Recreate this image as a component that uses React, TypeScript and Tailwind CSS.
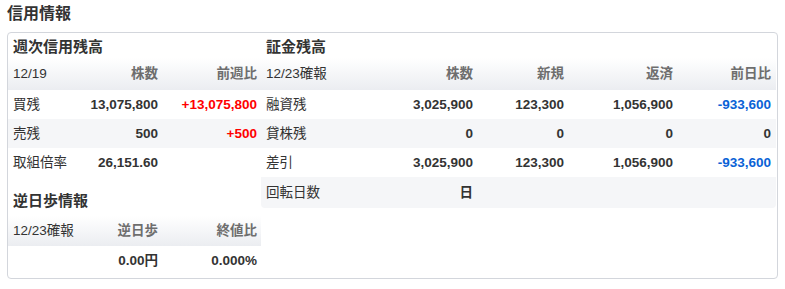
import React from "react";

const font = { fontFamily: '"Liberation Sans", Arial, "Noto Sans CJK JP", sans-serif' };

type Cell = { v: string; c?: "red" | "blue" };

const tone = (c?: string) =>
  c === "red" ? "text-[#ff0000]" : c === "blue" ? "text-[#0a62d6]" : "text-[#333]";

function HeadRow({ cols, widths }: { cols: string[]; widths: string }) {
  return (
    <div
      className={`grid ${widths} h-[32px] items-center bg-gradient-to-b from-white to-[#ebedf1]`}
    >
      {cols.map((c, i) =>
        i === 0 ? (
          <div key={i} className="pl-[5px] text-[#333]">
            {c}
          </div>
        ) : (
          <div key={i} className="pr-[4px] text-right font-bold text-[#6e6e6e]">
            {c}
          </div>
        )
      )}
    </div>
  );
}

function DataRow({
  label,
  cells,
  widths,
  gray,
  h = "h-[29px]",
  extra = "",
}: {
  label: string;
  cells: Cell[];
  widths: string;
  gray?: boolean;
  h?: string;
  extra?: string;
}) {
  return (
    <div className={`grid ${widths} ${h} items-center ${gray ? "bg-[#f5f6f8]" : ""} ${extra}`}>
      <div className="pl-[5px] text-[#333]">{label}</div>
      {cells.map((c, i) => (
        <div key={i} className={`pr-[4px] text-right font-bold ${tone(c.c)}`}>
          {c.v}
        </div>
      ))}
    </div>
  );
}

const leftCols = "grid-cols-[74px_80px_99px]";
const rightCols = "grid-cols-[108px_108px_91px_109px_98px]";

export default function App() {
  return (
    <div className="w-[785px] h-[289px] bg-white text-[13.5px] leading-none" style={font}>
      <div className="pl-[7px] pt-[6px] h-[32px] text-[16px] font-bold text-[#333]">信用情報</div>
      <div className="mx-[7px] w-[771px] h-[247px] flex border border-[#d3d6dc] rounded-[4px] overflow-hidden">
        <div className="w-[253px] flex flex-col">
          <div className="h-[25px] pl-[5px] pt-[6px] text-[15px] font-bold text-[#333]">週次信用残高</div>
          <HeadRow cols={["12/19", "株数", "前週比"]} widths={leftCols} />
          <DataRow
            label="買残"
            widths={leftCols}
            cells={[{ v: "13,075,800" }, { v: "+13,075,800", c: "red" }]}
          />
          <DataRow
            label="売残"
            widths={leftCols}
            gray
            cells={[{ v: "500" }, { v: "+500", c: "red" }]}
          />
          <DataRow label="取組倍率" widths={leftCols} cells={[{ v: "26,151.60" }, { v: "" }]} />
          <div className="h-[39px] pl-[5px] pt-[16px] text-[15px] font-bold text-[#333]">逆日歩情報</div>
          <div className="grid grid-cols-[74px_80px_99px] h-[30px] items-center bg-gradient-to-b from-white to-[#ebedf1]">
            <div className="pl-[5px] text-[#333] whitespace-nowrap">12/23確報</div>
            <div className="pr-[4px] text-right font-bold text-[#6e6e6e]">逆日歩</div>
            <div className="pr-[4px] text-right font-bold text-[#6e6e6e]">終値比</div>
          </div>
          <DataRow
            label=""
            widths={leftCols}
            h="h-[30px]"
            cells={[{ v: "0.00円" }, { v: "0.000%" }]}
          />
        </div>
        <div className="flex-1 mr-[1px] flex flex-col">
          <div className="h-[25px] pl-[5px] pt-[6px] text-[15px] font-bold text-[#333]">証金残高</div>
          <HeadRow cols={["12/23確報", "株数", "新規", "返済", "前日比"]} widths={rightCols} />
          <DataRow
            label="融資残"
            widths={rightCols}
            cells={[
              { v: "3,025,900" },
              { v: "123,300" },
              { v: "1,056,900" },
              { v: "-933,600", c: "blue" },
            ]}
          />
          <DataRow
            label="貸株残"
            widths={rightCols}
            gray
            cells={[{ v: "0" }, { v: "0" }, { v: "0" }, { v: "0" }]}
          />
          <DataRow
            label="差引"
            widths={rightCols}
            cells={[
              { v: "3,025,900" },
              { v: "123,300" },
              { v: "1,056,900" },
              { v: "-933,600", c: "blue" },
            ]}
          />
          <DataRow
            label="回転日数"
            widths={rightCols}
            gray
            h="h-[31px]"
            extra="rounded-b-[4px]"
            cells={[{ v: "日" }, { v: "" }, { v: "" }, { v: "" }]}
          />
        </div>
      </div>
    </div>
  );
}
